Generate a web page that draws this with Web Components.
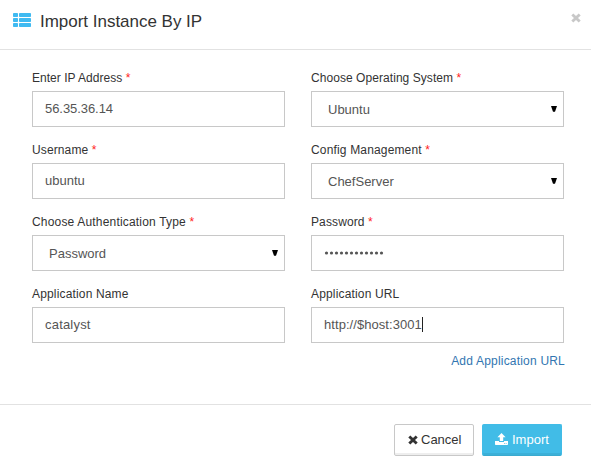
<!DOCTYPE html>
<html lang="en">
<head>
<meta charset="utf-8">
<title>Import Instance By IP</title>
<style>
html,body{margin:0;height:100%;background:#fff;overflow:hidden}
body{font-family:"Liberation Sans",Arial,sans-serif;color:#333}
</style>
</head>
<body>
<import-dialog></import-dialog>
<script>
const define = (name, html) => {
  const template = document.createElement('template');
  template.innerHTML = html;
  customElements.define(name, class extends HTMLElement {
    constructor() {
      super();
      this.attachShadow({mode: 'open'}).append(template.content.cloneNode(true));
    }
  });
};

define('dialog-header', `
<style>
:host{display:flex;box-sizing:border-box;height:50px;padding:0 10px 0 13px;border-bottom:1px solid #e2e2e2}
.list{width:18px;height:14px;margin:13px 9px 0 0;fill:#40baf1;flex:none}
h1{flex:1;margin:0;padding-top:12px;font:17px/20px "Liberation Sans",Arial,sans-serif;letter-spacing:-.02px;color:#333;white-space:nowrap}
.close{width:10px;height:10px;margin-top:13px;fill:#c8c8c8}
</style>
<svg class="list" viewBox="0 0 18 14"><rect width="5" height="4" rx=".8"/><rect x="6" width="12" height="4" rx=".8"/><rect y="5" width="5" height="4" rx=".8"/><rect x="6" y="5" width="12" height="4" rx=".8"/><rect y="10" width="5" height="4" rx=".8"/><rect x="6" y="10" width="12" height="4" rx=".8"/></svg>
<h1><slot></slot></h1>
<svg class="close" viewBox="0 0 10 10"><path d="M2.3.5 5 3.1 7.7.5 9.7 2.4 7 5l2.7 2.6-2 1.9L5 6.9 2.3 9.5.3 7.6 3 5 .3 2.4z"/></svg>`);

define('form-field', `
<style>
:host{display:block;height:72px;color:#555}
.label{height:20px;line-height:15px;box-sizing:border-box;font-size:12px;color:#333;letter-spacing:var(--label-spacing,.12px);white-space:nowrap}
.req{color:#f22;display:none}
:host([required]) .req{display:inline}
.box{display:flex;align-items:center;box-sizing:border-box;height:36px;border:1px solid #c8c8c8;padding:0 6px 2px 12px;font-size:13px;letter-spacing:var(--value-spacing,0);white-space:nowrap;background:#fff}
.value{flex:1;display:flex;align-items:center}
.arrow{display:none;width:6px;height:6px;fill:#000;margin-bottom:2px}
:host([select]) .box{padding:1px 6px 0 16px}
:host([select]) .arrow{display:block}
</style>
<div class="label"><slot name="label"></slot><span class="req"> *</span></div>
<div class="box"><span class="value"><slot></slot></span><svg class="arrow" viewBox="0 0 6 6"><path d="M0 0h6L4 5.700H2z"/></svg></div>`);

define('text-caret', `<style>:host{display:block;width:1px;height:15px;background:#222;margin-left:0}</style>`);

define('secret-dots', `
<style>:host{display:block}svg{display:block;width:60px;height:4px;fill:#555;margin-top:1px}</style>
<svg viewBox="0 0 60 4"></svg>`);

define('push-button', `
<style>
:host{display:flex;box-sizing:border-box;width:80px;height:32px;border:1px solid #c8c8c8;border-radius:2px;box-shadow:inset 0 -2px 0 #eee;font-size:13px;line-height:15px;padding:7px 0 0 13px;color:#333;background:#fff;white-space:nowrap;gap:3px}
:host([primary]){background:#41bce7;border-color:#41bce7 #41bce7 #3aaacf;box-shadow:inset 0 -2px 0 #3bb0d8;color:#fff;gap:4px;padding-left:12px}
</style>
<slot name="icon"></slot><slot></slot>`);

define('import-dialog', `
<style>
:host{display:flex;flex-direction:column;height:475px;width:591px;background:#fff}
main{box-sizing:border-box;height:355px;padding:21px 27px 0 32px;border-bottom:1px solid #e2e2e2}
.grid{display:grid;grid-template-columns:253px 253px;column-gap:26px}
.more{display:flex;justify-content:flex-end;margin-top:-6px}
a{font-size:12px;line-height:16px;color:#3276b1;letter-spacing:.2px;text-decoration:none;white-space:nowrap;margin-right:-1px}
footer{display:flex;justify-content:flex-end;gap:8px;padding:19px 29px 0 0}
.x{width:10px;height:10px;fill:#333;margin-top:3px}
.up{width:13px;height:12px;fill:#fff;margin-top:1px}
</style>
<dialog-header>Import Instance By IP</dialog-header>
<main>
<div class="grid">
<form-field required style="--label-spacing:.03px;--value-spacing:-.06px"><span slot="label">Enter IP Address</span>56.35.36.14</form-field>
<form-field required select style="--label-spacing:.06px"><span slot="label">Choose Operating System</span>Ubuntu</form-field>
<form-field required><span slot="label">Username</span>ubuntu</form-field>
<form-field required select style="--label-spacing:.16px"><span slot="label">Config Management</span>ChefServer</form-field>
<form-field required select style="--label-spacing:.18px"><span slot="label">Choose Authentication Type</span>Password</form-field>
<form-field required><span slot="label">Password</span><secret-dots></secret-dots></form-field>
<form-field style="--label-spacing:.16px;--value-spacing:.2px"><span slot="label">Application Name</span>catalyst</form-field>
<form-field style="--label-spacing:.16px;--value-spacing:.06px"><span slot="label">Application URL</span>http://$host:3001<text-caret></text-caret></form-field>
</div>
<div class="more"><a>Add Application URL</a></div>
</main>
<footer>
<push-button><svg slot="icon" class="x" viewBox="0 0 10 10"><path d="M2.3.5 5 3.1 7.7.5 9.7 2.4 7 5l2.7 2.6-2 1.9L5 6.9 2.3 9.5.3 7.6 3 5 .3 2.4z"/></svg>Cancel</push-button>
<push-button primary><svg slot="icon" class="up" viewBox="0 0 13 12"><path d="M6.5 0 10.600 4.200H8.200V8H4.800V4.200H2.400zM0 8h4v1h5V8h4v3.3q0 .7-.7.7H.7Q0 12 0 11.300z"/><path d="M9 10.300h.9v.8H9zm1.700 0h.9v.8h-.9z" fill="#41bce7"/></svg>Import</push-button>
</footer>`);

// One bullet for each of the twelve masked characters
const dialog = document.querySelector('import-dialog').shadowRoot;
const dots = dialog.querySelector('secret-dots').shadowRoot.querySelector('svg');
for (let i = 0; i < 12; i++) {
  const dot = document.createElementNS('http://www.w3.org/2000/svg', 'circle');
  dot.setAttribute('cx', 2.500 + i * 5);
  dot.setAttribute('cy', 2);
  dot.setAttribute('r', 1.600);
  dots.append(dot);
}
</script>
</body>
</html>
